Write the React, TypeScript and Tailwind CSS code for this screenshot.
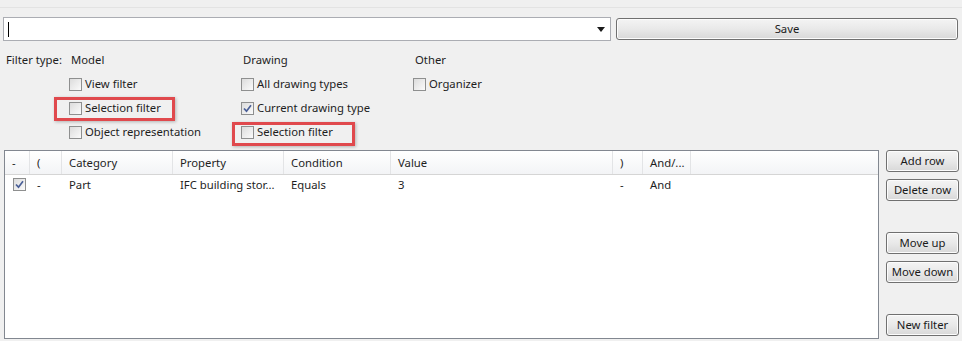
import type { ReactNode } from "react";

const cols = [
  "w-[25px]",
  "w-[32px]",
  "w-[111px]",
  "w-[111px]",
  "w-[107px]",
  "w-[222px]",
  "w-[30px]",
  "w-[48px]",
];

const headers = ["-", "(", "Category", "Property", "Condition", "Value", ")", "And/..."];

const Check = ({ checked = false }: { checked?: boolean }) => (
  <span className="flex h-[13px] w-[13px] shrink-0 items-center justify-center border border-[#8e8f8f] bg-gradient-to-br from-[#dcdcdc] to-[#fbfbfb]">
    {checked && (
      <svg width="9" height="9" viewBox="0 0 9 9">
        <path d="M1 4.5 L3.5 7.2 L8 1.2" fill="none" stroke="#4a5f97" strokeWidth="1.7" />
      </svg>
    )}
  </span>
);

const CheckRow = ({ label, checked }: { label: string; checked?: boolean }) => (
  <div className="flex h-[24px] items-center gap-[3px]">
    <Check checked={checked} />
    <span>{label}</span>
  </div>
);

const WinButton = ({ children, className }: { children: ReactNode; className?: string }) => (
  <button
    className={`flex h-[22px] items-center justify-center rounded-[3px] border border-[#707070] bg-gradient-to-b from-[#f4f4f4] via-[#e9e9e9] to-[#d8d8d8] text-[#1a1a1a] shadow-[inset_0_0_0_1px_#fcfcfc] ${className ?? ""}`}
  >
    {children}
  </button>
);

const App = () => {
  return (
    <div className="relative h-[341px] w-[962px] overflow-hidden bg-[#f0f0f0] font-['Noto_Sans',sans-serif] text-[11.3px] leading-none text-[#1e1e1e]">
      <div className="mt-[7px] h-px w-full bg-[#e3e3e3]" />

      {/* combobox + save */}
      <div className="ml-[3px] mt-[9px] flex items-center gap-[5px]">
        <div className="flex h-[24px] w-[608px] items-center justify-between border border-[#abadb3] bg-white px-[4px]">
          <span className="h-[15px] w-px bg-black" />
          <svg width="8" height="5" viewBox="0 0 8 5" className="mr-[1px]">
            <path d="M0 0 H8 L4 5 Z" fill="#1a1a1a" />
          </svg>
        </div>
        <WinButton className="w-[342px]">Save</WinButton>
      </div>

      {/* filter type */}
      <div className="mt-[7px] flex">
        <div className="w-[71px] pl-[6px]">
          <div className="flex h-[23px] items-center">Filter type:</div>
        </div>
        <div className="w-[172px]">
          <div className="flex h-[23px] items-center">Model</div>
          <div className="-ml-[2px] mt-px">
            <CheckRow label="View filter" />
            <CheckRow label="Selection filter" />
            <CheckRow label="Object representation" />
          </div>
        </div>
        <div className="w-[172px]">
          <div className="flex h-[23px] items-center">Drawing</div>
          <div className="-ml-[2px] mt-px">
            <CheckRow label="All drawing types" />
            <CheckRow label="Current drawing type" checked />
            <CheckRow label="Selection filter" />
          </div>
        </div>
        <div>
          <div className="flex h-[23px] items-center">Other</div>
          <div className="-ml-[2px] mt-px">
            <CheckRow label="Organizer" />
          </div>
        </div>
      </div>

      {/* table + buttons */}
      <div className="mt-[6px] flex">
        <div className="ml-[4px] h-[189px] w-[875px] border border-[#828790] bg-white">
          <div className="flex h-[24px] border-b border-[#d5d5d5] bg-gradient-to-b from-white to-[#f3f4f6]">
            {headers.map((h, i) => (
              <div
                key={h}
                className={`flex ${cols[i]} items-center border-r border-[#e3e4e6] pl-[7px]`}
              >
                {h}
              </div>
            ))}
          </div>
          <div className="flex h-[19px]">
            <div className={`flex ${cols[0]} items-center pl-[8px]`}>
              <Check checked />
            </div>
            {["-", "Part", "IFC building stor...", "Equals", "3", "-", "And"].map((c, i) => (
              <div key={i} className={`flex ${cols[i + 1]} items-center pl-[7px]`}>
                {c}
              </div>
            ))}
          </div>
        </div>
        <div className="ml-[7px] flex w-[73px] flex-col">
          <WinButton>Add row</WinButton>
          <WinButton className="mt-[7px]">Delete row</WinButton>
          <WinButton className="mt-[31px]">Move up</WinButton>
          <WinButton className="mt-[7px]">Move down</WinButton>
          <WinButton className="mt-[31px]">New filter</WinButton>
        </div>
      </div>

      {/* highlight marks */}
      <div className="absolute left-[54px] top-[97px] h-[24px] w-[121px] border-[3px] border-[#e0494d] shadow-[1px_1px_3px_rgba(0,0,0,0.25)]" />
      <div className="absolute left-[232px] top-[122px] h-[24px] w-[123px] border-[3px] border-[#e0494d] shadow-[1px_1px_3px_rgba(0,0,0,0.25)]" />
    </div>
  );
};

export default App;
